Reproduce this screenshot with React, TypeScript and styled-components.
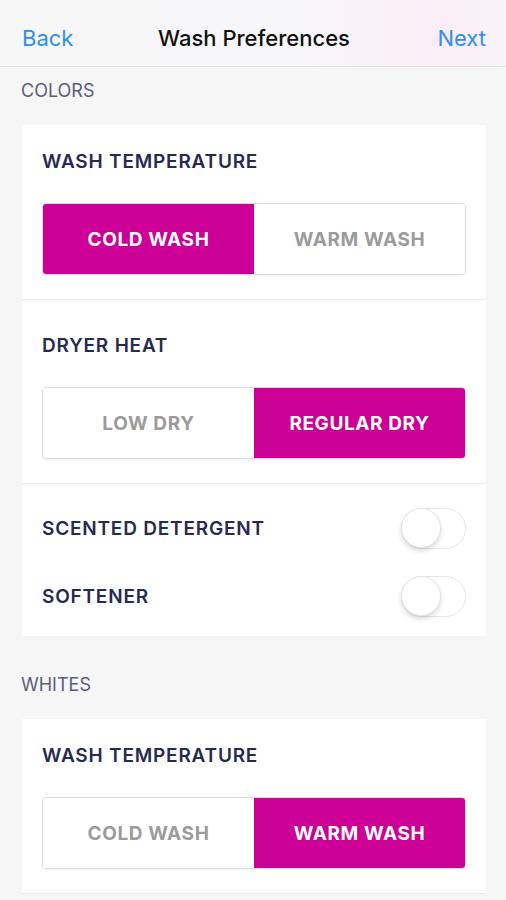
import React, { useState } from 'react';
import styled, { createGlobalStyle } from 'styled-components';

const GlobalStyle = createGlobalStyle`
  html, body {
    margin: 0;
    padding: 0;
    background: #f6f6f7;
    font-family: Inter, "Open Sans", Arial, sans-serif;
  }
`;

const Page = styled.div`
  width: 506px;
  height: 900px;
  background: #f6f6f7;
  overflow: hidden;
`;

const NavBar = styled.div`
  height: 67px;
  box-sizing: border-box;
  display: grid;
  grid-template-columns: 1fr auto 1fr;
  align-items: center;
  padding: 10px 20px 0 22px;
  background: linear-gradient(90deg, #f7f7f8 0%, #f7f6f8 60%, #fbeef6 88%, #f8f4f7 100%);
  border-bottom: 1px solid #e2e2e4;
`;

const NavButton = styled.div<{ $align: 'left' | 'right' }>`
  font-size: 22px;
  color: #2f8ef0;
  justify-self: ${(p) => (p.$align === 'left' ? 'start' : 'end')};
`;

const NavTitle = styled.div`
  font-size: 22px;
  font-weight: 500;
  color: #111;
`;

const GroupTitle = styled.div<{ $first?: boolean }>`
  padding: ${(p) => (p.$first ? '14px' : '39px')} 21px 24px;
  font-size: 18px;
  line-height: 20px;
  color: #5c5c78;
`;

const Card = styled.div`
  margin: 0 20px 0 22px;
  background: #fff;
`;

const Section = styled.div<{ $first?: boolean }>`
  padding: ${(p) => (p.$first ? '25px' : '34px')} 20px 24px 20px;
  border-bottom: 1px solid #ececee;
`;

const Label = styled.div`
  font-size: 19px;
  font-weight: 600;
  color: #262a52;
  letter-spacing: 0.8px;
  line-height: 24px;
`;

const Segmented = styled.div`
  margin-top: 29px;
  height: 72px;
  box-sizing: border-box;
  display: grid;
  grid-template-columns: 1fr 1fr;
  border: 1px solid #dcdcde;
  border-radius: 4px;
  overflow: hidden;
  box-shadow: 0 1px 2px rgba(0, 0, 0, 0.06);
`;

const Segment = styled.div<{ $active: boolean }>`
  display: flex;
  align-items: center;
  justify-content: center;
  font-size: 19px;
  font-weight: 700;
  letter-spacing: 0.6px;
  background: ${(p) => (p.$active ? '#cc0096' : '#fff')};
  color: ${(p) => (p.$active ? '#fff' : '#9b9b9b')};
`;

const ToggleSection = styled.div`
  padding: 24px 20px 19px 20px;
  display: flex;
  flex-direction: column;
  gap: 27px;
`;

const ToggleRow = styled.div`
  display: flex;
  align-items: center;
  justify-content: space-between;
`;

const Switch = styled.div<{ $on: boolean }>`
  position: relative;
  width: 65px;
  height: 41px;
  box-sizing: border-box;
  border-radius: 21px;
  border: 1.5px solid #e6e6e8;
  background: ${(p) => (p.$on ? '#cc0096' : '#fff')};
`;

const Knob = styled.div<{ $on: boolean }>`
  position: absolute;
  top: -1px;
  left: ${(p) => (p.$on ? '24px' : '-1px')};
  width: 40px;
  height: 40px;
  box-sizing: border-box;
  border-radius: 50%;
  background: #fff;
  border: 1px solid #e4e4e6;
  box-shadow: 0 3px 5px rgba(0, 0, 0, 0.14);
`;

interface ChoiceProps {
  label: string;
  options: [string, string];
  initial: number;
  first?: boolean;
}

const Choice: React.FC<ChoiceProps> = ({ label, options, initial, first }) => {
  const [value, setValue] = useState(initial);
  return (
    <Section $first={first}>
      <Label>{label}</Label>
      <Segmented>
        {options.map((opt, i) => (
          <Segment key={opt} $active={value === i} onClick={() => setValue(i)}>
            {opt}
          </Segment>
        ))}
      </Segmented>
    </Section>
  );
};

const Toggle: React.FC<{ label: string }> = ({ label }) => {
  const [on, setOn] = useState(false);
  return (
    <ToggleRow>
      <Label>{label}</Label>
      <Switch $on={on} onClick={() => setOn(!on)}>
        <Knob $on={on} />
      </Switch>
    </ToggleRow>
  );
};

export default function App() {
  return (
    <Page>
      <GlobalStyle />
      <NavBar>
        <NavButton $align="left">Back</NavButton>
        <NavTitle>Wash Preferences</NavTitle>
        <NavButton $align="right">Next</NavButton>
      </NavBar>

      <GroupTitle $first>COLORS</GroupTitle>
      <Card>
        <Choice first label="WASH TEMPERATURE" options={['COLD WASH', 'WARM WASH']} initial={0} />
        <Choice label="DRYER HEAT" options={['LOW DRY', 'REGULAR DRY']} initial={1} />
        <ToggleSection>
          <Toggle label="SCENTED DETERGENT" />
          <Toggle label="SOFTENER" />
        </ToggleSection>
      </Card>

      <GroupTitle>WHITES</GroupTitle>
      <Card>
        <Choice first label="WASH TEMPERATURE" options={['COLD WASH', 'WARM WASH']} initial={1} />
      </Card>
    </Page>
  );
}
